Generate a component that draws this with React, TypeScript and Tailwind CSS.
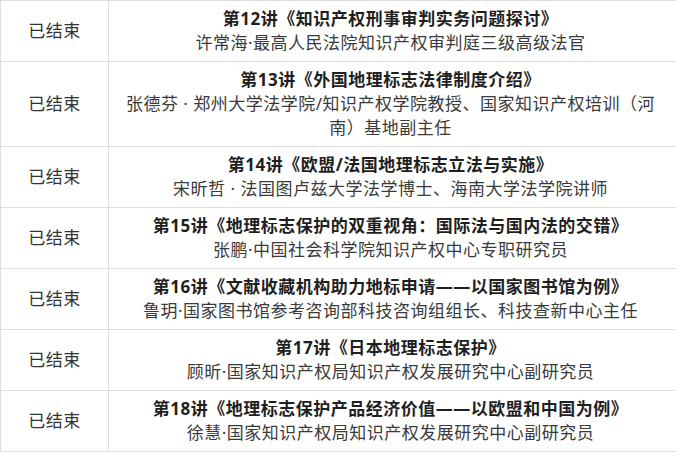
import * as React from 'react';

type Lecture = {
  title: string;
  speaker: React.ReactNode;
};

const lectures: Lecture[] = [
  {
    title: '第12讲《知识产权刑事审判实务问题探讨》',
    speaker: '许常海·最高人民法院知识产权审判庭三级高级法官',
  },
  {
    title: '第13讲《外国地理标志法律制度介绍》',
    speaker: (
      <>
        张德芬 · 郑州大学法学院/知识产权学院教授、国家知识产权培训（河
        <br />
        南）基地副主任
      </>
    ),
  },
  {
    title: '第14讲《欧盟/法国地理标志立法与实施》',
    speaker: '宋昕哲 · 法国图卢兹大学法学博士、海南大学法学院讲师',
  },
  {
    title: '第15讲《地理标志保护的双重视角：国际法与国内法的交错》',
    speaker: '张鹏·中国社会科学院知识产权中心专职研究员',
  },
  {
    title: '第16讲《文献收藏机构助力地标申请——以国家图书馆为例》',
    speaker: '鲁玥·国家图书馆参考咨询部科技咨询组组长、科技查新中心主任',
  },
  {
    title: '第17讲《日本地理标志保护》',
    speaker: '顾昕·国家知识产权局知识产权发展研究中心副研究员',
  },
  {
    title: '第18讲《地理标志保护产品经济价值——以欧盟和中国为例》',
    speaker: '徐慧·国家知识产权局知识产权发展研究中心副研究员',
  },
];

export default function App() {
  return (
    <div
      className="w-[676px] h-[455px] overflow-hidden bg-white"
      style={{ fontFamily: '"Noto Sans", "Noto Sans CJK SC", sans-serif' }}
    >
      <table className="w-[676px] border-collapse text-[17px] leading-[24px]">
        <tbody>
          {lectures.map((item, i) => (
            <tr key={i} className="border-y border-[#dddddd]">
              <td className="w-[108px] border-x border-[#dddddd] text-center align-middle tracking-[0.5px] text-[#333333]">
                已结束
              </td>
              <td className="pl-[6px] pr-[10px] py-[6px] text-center align-middle tracking-[0.5px]">
                <div className="font-bold text-[#1f1f1f]">{item.title}</div>
                <div className="text-[#3a3a3a]">{item.speaker}</div>
              </td>
            </tr>
          ))}
        </tbody>
      </table>
    </div>
  );
}
